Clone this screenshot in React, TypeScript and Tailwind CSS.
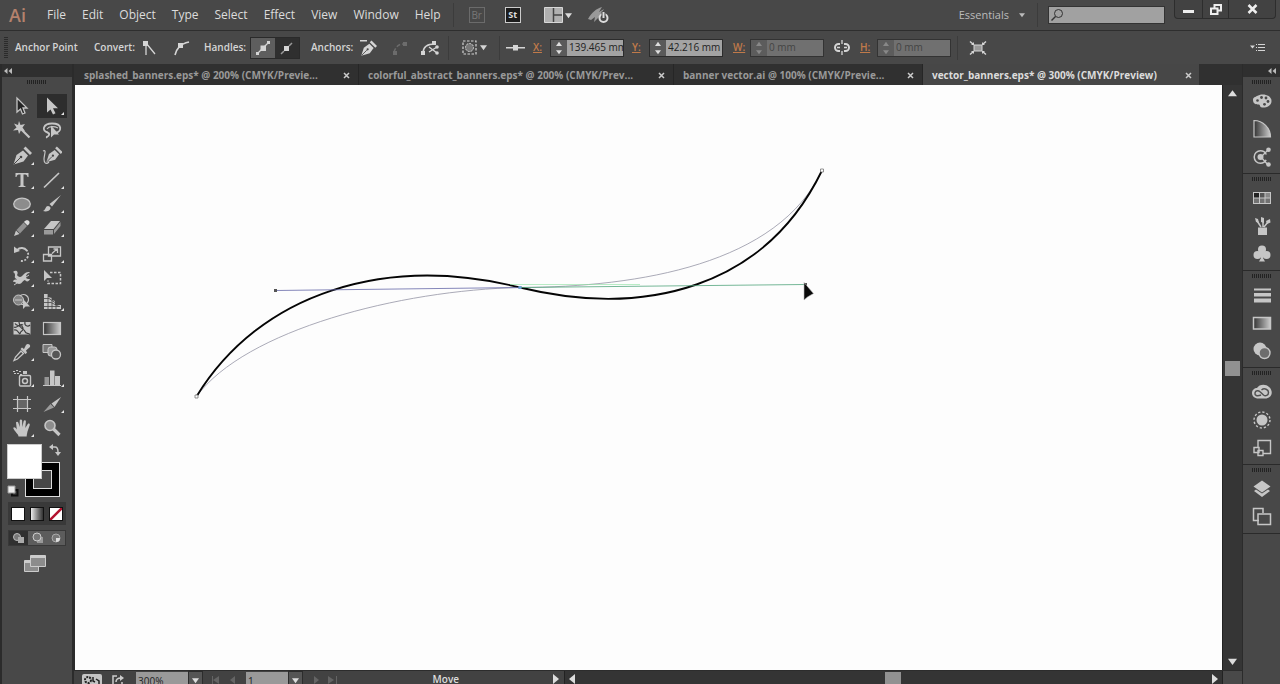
import { ReactNode } from "react";

const menus = ["File", "Edit", "Object", "Type", "Select", "Effect", "View", "Window", "Help"];

const tabs = [
  { title: "splashed_banners.eps* @ 200% (CMYK/Previe...", width: "w-[284px]" },
  { title: "colorful_abstract_banners.eps* @ 200% (CMYK/Prev...", width: "w-[315px]" },
  { title: "banner vector.ai @ 100% (CMYK/Previe...", width: "w-[249px]" },
  { title: "vector_banners.eps* @ 300% (CMYK/Preview)", width: "w-[276px]", active: true },
];

// 20px icon, filled with the current text colour
function Icon({ children }: { children: ReactNode }) {
  return (
    <svg width="20" height="20" viewBox="0 0 20 20" fill="currentColor" className="shrink-0">
      {children}
    </svg>
  );
}

function Line({ d, w = 1.5 }: { d: string; w?: number }) {
  return <path d={d} fill="none" stroke="currentColor" strokeWidth={w} />;
}

function Grip() {
  return (
    <div className="h-[10px] flex items-center justify-center">
      <svg width="20" height="4" fill="#222">
        {[0, 2, 4, 6, 8, 10, 12, 14, 16, 18].map((x) => (
          <rect key={x} x={x} width="1" height="4" />
        ))}
      </svg>
    </div>
  );
}

function Down({ size = 7 }: { size?: number }) {
  return (
    <svg width={size} height={size} viewBox="0 0 8 8" fill="currentColor" className="shrink-0">
      <path d="M0 1.5h8L4 7z" />
    </svg>
  );
}

function Collapse() {
  return (
    <svg width="8" height="6" viewBox="0 0 8 6" fill="#bbb">
      <path d="M3.500 0v6L0 3zM8 0v6L4.500 3z" />
    </svg>
  );
}

const penNib = (
  <>
    <path d="M1.500 18.500 4.500 9 11 4.500l5 5-4.500 6z" />
    <path d="m11.500 2.500 2-2 6.500 6.500-2 2z" />
    <path d="m2 18 6-6" stroke="#454545" strokeWidth="1" />
    <circle cx="9" cy="11" r="1.300" fill="#454545" />
  </>
);

const toolGroups: { name: string; icon: ReactNode; more?: boolean; on?: boolean }[][] = [
  [
    {
      name: "Selection",
      icon: (
        <path d="M5 2v14l3.500-3 2 5 2.500-1-2-5H15z" fill="#252525" stroke="currentColor" strokeWidth="1.300" />
      ),
    },
    { name: "Direct Selection", more: true, on: true, icon: <path d="M5 1.500v15l3.500-3 2.500 5 2.500-1.200-2.500-5H16z" /> },
    {
      name: "Magic Wand",
      icon: (
        <>
          <path d="m7 1 1.500 4L13 4l-2.500 3.500L13 11l-4-.8L7 14l-1-4-5 .5 3.500-3L2 3.500 6 5z" />
          <Line d="m9 9 8.500 8.500" w={2.2} />
        </>
      ),
    },
    {
      name: "Lasso",
      icon: (
        <>
          <Line d="M6 12.500C-1 11 1 3.500 10 3.500c11 0 10 8.500 3 9.500M4 11.500c1.500 2 4 1 3 3.500S4 16 5 18" w={1.800} />
          <Line d="M5 9c2-3 7-3 11-1" w={1.200} />
          <path d="M9 5.500v12l3-3h5z" />
        </>
      ),
    },
  ],
  [
    { name: "Pen", more: true, icon: penNib },
    {
      name: "Curvature",
      icon: (
        <>
          <Line d="M1 5c4-2 1 4 1 8s2 6 5 3" w={1.200} />
          <g transform="translate(3 0) scale(.88)">{penNib}</g>
        </>
      ),
    },
    {
      name: "Type",
      more: true,
      icon: <path d="M3.500 3h13v4h-1c-.3-1.800-1-2.400-4-2.400V15c0 .8.600 1 2 1.200v.8h-7v-.8c1.500-.2 2-.4 2-1.200V4.600C5.500 4.600 4.800 5.200 4.500 7h-1z" />,
    },
    { name: "Line Segment", more: true, icon: <Line d="M2 17.500 17 3" w={1.700} /> },
    {
      name: "Ellipse",
      more: true,
      icon: <ellipse cx="10" cy="10" rx="8.300" ry="5.800" fill="#8c8c8c" stroke="currentColor" strokeWidth="1.300" />,
    },
    {
      name: "Paintbrush",
      more: true,
      icon: (
        <path d="m19 1-9 11.500-2.500-2.500zM1 17c2-.5 2-2.500 3.500-4.500 1.500-1.500 4.500.2 4 2C7.800 17 4 18 1 17z" />
      ),
    },
    {
      name: "Pencil",
      more: true,
      icon: (
        <>
          <path d="m2 18 2-5.500 3.500 3.500z" />
          <path d="m4.500 12 7-7.500L15 8l-7 7.500z" fill="#919191" />
          <path d="M12 4c1.500-2.500 5-2.500 5.500 0 .3 1.500-.8 2.500-2 3.500z" fill="#ddd" />
        </>
      ),
    },
    {
      name: "Eraser",
      more: true,
      icon: (
        <>
          <path d="m2 11 7-8h9l-6.500 8z" />
          <path d="M2 12h9v4.500H2zM12 12l6.500-8v4L12 16z" fill="#9a9a9a" />
        </>
      ),
    },
  ],
  [
    {
      name: "Rotate",
      more: true,
      icon: (
        <>
          <path d="M5 6a6.500 6.500 0 1 1-1.500 6.500" fill="none" stroke="currentColor" strokeWidth="1.800" strokeDasharray="12 1.500 2 1.500 2 1.500 2 1.500 2" />
          <path d="M2 2.500v6.500l6-2z" />
        </>
      ),
    },
    {
      name: "Scale",
      more: true,
      icon: (
        <>
          <Line d="M6.500 3h12v9h-12zM1.500 10.500h8v6.500h-8z" w={1.300} />
          <Line d="m10 9.500 5-4.500M11.500 5h4v4" w={1.300} />
        </>
      ),
    },
    {
      name: "Width",
      more: true,
      icon: (
        <>
          <path d="M1 4c3-3 6 0 4 3 3 4 5 1 7-1s5-3 6-1c-3 0-4 2-4 4s2 2 4 2c-1 3-4 3-5 1-2 0-3 4-6 4s-4-3-6-2c0-2 2-3 4-2-1-2-3-2-2-4 0-2 0-3-2-4z" />
          <Line d="m2 17 15-10" w={1} />
        </>
      ),
    },
    {
      name: "Free Transform",
      icon: (
        <>
          <path d="M2 2v11l3-3h5z" />
          <path d="M8 4.500h10.500v11H6v-3" fill="none" stroke="currentColor" strokeWidth="1.500" strokeDasharray="2.500 1.500" />
        </>
      ),
    },
    {
      name: "Shape Builder",
      more: true,
      icon: (
        <>
          <circle cx="6.500" cy="8" r="5" fill="#858585" stroke="currentColor" />
          <path d="M8 4a5 5 0 1 1 1 8" fill="none" stroke="currentColor" strokeWidth="1.300" />
          <Line d="M3 8h7" w={1} />
          <path d="M11 7v10l2.500-2.500H18z" />
        </>
      ),
    },
    {
      name: "Perspective Grid",
      more: true,
      icon: (
        <>
          <path d="M2 2h4v15H2zM6 5l4 1v11H6zM10 8l3 1v8h-3zM13 13h6v4h-6z" />
          <path d="M2 6.500h5l6 4M2 10.500h7l8 4M2 14.500h16M6 2v15M10 6v11M14 11v6" fill="none" stroke="#454545" strokeWidth=".8" />
        </>
      ),
    },
  ],
  [
    {
      name: "Mesh",
      icon: (
        <>
          <rect x="1.500" y="4" width="17" height="12.500" />
          <path d="M3 5.500c2 3 4 1 6 4s3 1 4 4 3 1 5 3M2 12c4-1 3 2 6 4M7 4c0 5 3 2 4 6s-3 2-3 6M13 4c-1 4 3 5 5 3M2 9c3 2 5-4 9-2" fill="none" stroke="#3d3d3d" strokeWidth="1.200" />
        </>
      ),
    },
    { name: "Gradient", icon: <rect x="1.500" y="4.500" width="17" height="12" fill="url(#fade)" stroke="currentColor" strokeWidth="1.200" /> },
    {
      name: "Eyedropper",
      more: true,
      icon: (
        <>
          <path d="M10 5.500 12 7l2-4c1.500-2 5-.5 4 2l-4 3.500 1 2.200-1.500 1.300L8.500 7z" />
          <path d="m9 9 2.500 2.500-6 5.500L2 18.500l1.500-3.500z" fill="none" stroke="currentColor" strokeWidth="1.300" />
        </>
      ),
    },
    {
      name: "Blend",
      icon: (
        <>
          <path d="M1 2.500h9v8H1z" fill="#787878" stroke="currentColor" />
          <rect x="6" y="5" width="9" height="9" rx="2.500" fill="#999" stroke="#ccc" />
          <circle cx="14" cy="12.500" r="4.500" fill="#555" stroke="currentColor" strokeWidth="1.300" />
        </>
      ),
    },
  ],
  [
    {
      name: "Symbol Sprayer",
      more: true,
      icon: (
        <>
          <path d="M1 3h2v1H1zM4 2h2v1H4zM7 3h2v1H7zM2 5h2v1H2zM5 5h2v1H5zM8 6h2v1H8z" />
          <path d="M11 3h4v3h-4z" />
          <rect x="7.500" y="7.500" width="11" height="10.500" rx="1" fill="none" stroke="currentColor" strokeWidth="1.400" />
          <circle cx="13" cy="13" r="2.500" fill="none" stroke="currentColor" strokeWidth="1.500" />
        </>
      ),
    },
    {
      name: "Column Graph",
      more: true,
      icon: (
        <>
          <path d="M1 17h18v1H1zM13 8h5v9h-5z" />
          <path d="M2.500 9H7v8H2.500z" fill="#969696" />
          <path d="M8 2.500h4.500V17H8z" />
        </>
      ),
    },
  ],
  [
    {
      name: "Artboard",
      icon: (
        <>
          <path d="M6 6h9v8H6z" fill="#666" />
          <Line d="M5.500 2v16M15.500 2v16M1 5.500h18M1 14.500h18" w={1.200} />
        </>
      ),
    },
    {
      name: "Slice",
      more: true,
      icon: (
        <>
          <path d="M19 3 12.500 13l-3-3.500z" />
          <path d="m8.500 10 3.500 3.500L1.500 18z" fill="#9c9c9c" />
        </>
      ),
    },
    {
      name: "Hand",
      more: true,
      icon: <path d="M6.500 18.500c0-2.500-4-5-5.300-8.500.6-1.200 2.200-.8 3.600 1.500L4 4.500c.3-1.200 2-1 2.300 0L7.700 9V2.500c.3-1.300 2.100-1.300 2.400 0L10.300 9l1.400-6c.5-1.100 2.200-.8 2.200.5L13.300 10l2.500-4c.9-.9 2.400-.2 1.900 1.200L15.500 13.500c-.4 2-.8 3.500-.8 5z" />,
    },
    {
      name: "Zoom",
      icon: (
        <>
          <circle cx="8" cy="7.500" r="5" fill="#8d8d8d" stroke="currentColor" strokeWidth="1.600" />
          <Line d="m11.500 11 6 6" w={3.200} />
        </>
      ),
    },
  ],
];

const panelGroups: { name: string; icon: ReactNode }[][] = [
  [
    {
      name: "Color",
      icon: (
        <>
          <path d="M1 9c0-3 2.500-3 4-4C9 2 19.500 3 19.500 10c0 5-5.500 7-9.500 6.500-2.500-.3-1.500-3-3.500-3S1 13 1 9z" />
          <g fill="#484848">
            <circle cx="9.500" cy="6.500" r="1.400" />
            <circle cx="14" cy="7" r="1.400" />
            <circle cx="16" cy="10.500" r="1.400" />
            <circle cx="12.500" cy="13.300" r="1.400" />
            <circle cx="5.500" cy="9.500" r="1.300" />
          </g>
        </>
      ),
    },
    { name: "Color Guide", icon: <path d="M2 1.500c9 0 16.500 7.500 16.500 16.500H2z" fill="url(#fade)" stroke="currentColor" strokeWidth="1.200" /> },
    {
      name: "Color Themes",
      icon: (
        <>
          <circle cx="8.500" cy="10" r="6.300" fill="none" stroke="currentColor" strokeWidth="1.500" strokeDasharray="33 7" strokeDashoffset="-3" />
          <circle cx="8.500" cy="10" r="3" />
          <Line d="m9 10 7-7M9 10l7 8" w={1.300} />
          <circle cx="16.500" cy="2.800" r="2.300" />
          <circle cx="16.500" cy="17.500" r="2.300" />
        </>
      ),
    },
  ],
  [
    {
      name: "Swatches",
      icon: (
        <>
          <rect x="1" y="4" width="18" height="12" />
          <path d="M2 5h5v4.500H2z" fill="#222" />
          <path d="M8 5h4.500v4.500H8z" fill="#555" />
          <path d="M13.500 5H18v4.500h-4.500z" fill="#888" />
          <path d="M2 10.500h5V15H2zM8 10.500h4.500V15H8zM13.500 10.500H18V15h-4.500z" fill="#727272" />
        </>
      ),
    },
    {
      name: "Brushes",
      icon: (
        <>
          <path d="M6 11.500h9V19H6z" />
          <Line d="M9 11 4.500 4M11 11V3M12 11l4-5" w={1.500} />
          <path d="M3 2l3 1 1 4-3-1zM9 1l3 1v5l-3-1zM14 5l4-2 .5 3.500L15 8z" />
        </>
      ),
    },
    {
      name: "Symbols",
      icon: (
        <>
          <circle cx="10" cy="5.500" r="4" />
          <circle cx="5.500" cy="11" r="4" />
          <circle cx="14.500" cy="11" r="4" />
          <path d="M9 8h2v6l2 3.500H7L9 14z" />
        </>
      ),
    },
  ],
  [
    { name: "Stroke", icon: <path d="M2 3.500h17v2H2zM2 8h17v3.500H2zM2 13.500h17v4H2z" /> },
    { name: "Gradient panel", icon: <rect x="1.500" y="4.500" width="17" height="11.500" fill="url(#fade)" stroke="currentColor" strokeWidth="1.500" /> },
    {
      name: "Transparency",
      icon: (
        <>
          <circle cx="8" cy="8" r="6.500" />
          <circle cx="12.500" cy="12" r="5.500" fill="#6d6d6d" stroke="currentColor" strokeWidth="1.400" />
        </>
      ),
    },
  ],
  [
    {
      name: "Libraries",
      icon: (
        <>
          <path d="M6.500 16.500C2.500 16.500 0 14 0 11s2.500-5 5-5c2-4 9-4.500 12-1 4 3 4 10-2.500 11.500z" />
          <path d="M9 13c-4 1.500-6.500.5-6-2.200.5-2.500 3.500-2.500 5-1l3.500 3.200c2 1.500 5 .5 5-2.500s-4-5-7-2.500" fill="none" stroke="#515151" strokeWidth="1.500" />
        </>
      ),
    },
    {
      name: "Appearance",
      icon: (
        <>
          <circle cx="10" cy="10" r="5.500" />
          <circle cx="10" cy="10" r="8" fill="none" stroke="currentColor" strokeWidth="1.400" strokeDasharray="2.200 2" />
        </>
      ),
    },
    {
      name: "Asset Export",
      icon: <Line d="M6 9V2.500h12.500v13H11M2 9.500h5v5H2zM6 12.500h5v5H6z" w={1.400} />,
    },
  ],
  [
    {
      name: "Layers",
      icon: (
        <>
          <path d="m10 1.500 8.500 6L10 13.500 1.500 7.500z" />
          <path d="m2 12 2-1.500 6 4 6-4 2 1.500-8 6z" />
        </>
      ),
    },
    {
      name: "Artboards",
      icon: <Line d="M7 13.500H1.500V1.500h9.500V6M6 7h12.500v10.500H6z" w={1.500} />,
    },
  ],
];

function Divider() {
  return <div className="w-px h-6 bg-[#3c3c3c]" />;
}

function Measure({ id, label, value, off }: { id: string; label: string; value: string; off?: boolean }) {
  return (
    <div className="flex items-center">
      <label htmlFor={id} className="w-[17px] text-[#c07a4a] underline font-semibold">
        {label}
      </label>
      <div className={off ? "flex h-[18px] border border-[#333] bg-[#5c5c5c] text-[#888]" : "flex h-[18px] border border-[#2c2c2c] bg-[#5a5a5a] text-[#ddd]"}>
        <div className="w-4 flex flex-col">
          <button aria-label={label + " up"} className="flex-1 flex items-center justify-center rotate-180">
            <Down size={6} />
          </button>
          <button aria-label={label + " down"} className="flex-1 flex items-center justify-center">
            <Down size={6} />
          </button>
        </div>
        <input
          id={id}
          defaultValue={value}
          disabled={off}
          className={off ? "w-14 pl-[2px] bg-[#707070] text-[#444]" : "w-14 pl-[2px] bg-[#a3a3a3] text-[#222]"}
        />
      </div>
    </div>
  );
}

function MenuBar() {
  return (
    <header className="h-[31px] shrink-0 flex items-center border-b border-[#2e2e2e] pl-[9px] text-xs text-[#dcdcdc]">
      <h1 className="w-[38px] text-lg leading-5 text-[#b5826d] font-semibold">Ai</h1>
      <nav className="flex gap-4">
        {menus.map((m) => (
          <button key={m}>{m}</button>
        ))}
      </nav>
      <div className="ml-3 flex items-center">
        <Divider />
        <button className="ml-[15px] size-4 border border-[#6b6b6b] text-[10px] leading-3 text-[#777]">Br</button>
        <button className="ml-5 size-4 border border-[#ccc] bg-[#1c1c1c] text-[9px] leading-3 font-bold text-[#ddd]">St</button>
        <button aria-label="Arrange documents" className="ml-[23px] flex items-center gap-[2px]">
          <svg width="19" height="16" fill="#b0b0b0">
            <path d="M.500.500h18v15H.500z" stroke="#d8d8d8" />
            <path d="M9.500 1v14M10 8h8" stroke="#444" strokeWidth="1.500" />
          </svg>
          <Down />
        </button>
        <button aria-label="GPU performance" className="ml-[15px]">
          <svg width="24" height="18" fill="#999">
            <path d="M1 13C5 6 9 3 15 1l-3 5 5-3-5 8-5 5 1-5-4 3z" />
            <circle cx="16.500" cy="12" r="4" fill="#484848" stroke="#ddd" strokeWidth="2" />
            <path d="M16.500 5.500v7" stroke="#484848" strokeWidth="4" />
            <path d="M16.500 6v6" stroke="#ddd" strokeWidth="2" />
          </svg>
        </button>
      </div>
      <div className="ml-auto flex items-center self-stretch pr-1">
        <button className="flex items-center gap-[10px] text-[#bbb] text-[11px]">
          Essentials <Down size={6} />
        </button>
        <div className="ml-3">
          <Divider />
        </div>
        <label className="ml-[10px] w-[117px] h-[18px] flex items-center bg-[#a1a1a1] border border-[#333]">
          <svg width="16" height="14" fill="none" stroke="#333" className="ml-px shrink-0">
            <circle cx="8.500" cy="5.500" r="4" />
            <path d="m5.500 8.500-4 4" strokeWidth="1.500" />
          </svg>
          <input aria-label="Search" className="w-full min-w-0 bg-transparent" />
        </label>
        <div className="ml-[9px] self-start h-[19px] flex border border-t-0 border-[#2d2d2d] bg-[#424242] rounded-b text-[#eee]">
          <button aria-label="Minimize" className="w-7 flex items-center justify-center border-r border-[#2d2d2d]">
            <svg width="11" height="12">
              <path d="M0 7h11v3H0z" fill="currentColor" />
            </svg>
          </button>
          <button aria-label="Restore" className="w-[26px] flex items-center justify-center border-r border-[#2d2d2d]">
            <svg width="12" height="11" fill="none" stroke="currentColor" strokeWidth="2">
              <path d="M4.500 4V1H11v5.500H8M1 4.500h6.500V10H1z" />
            </svg>
          </button>
          <button aria-label="Close" className="w-[46px] flex items-center justify-center">
            <svg width="11" height="10" stroke="currentColor" strokeWidth="2.500">
              <path d="m1.500 1 8 8M9.500 1l-8 8" />
            </svg>
          </button>
        </div>
      </div>
    </header>
  );
}

function ControlBar() {
  return (
    <div className="h-[33px] shrink-0 flex items-center pl-1 pr-[15px] text-[10px] text-[#d5d5d5]">
      <div className="w-[11px]">
        <svg width="4" height="22" fill="#2b2b2b">
          {[0, 2, 4, 6, 8, 10, 12, 14, 16, 18, 20].map((y) => (
            <rect key={y} y={y} width="4" height="1" />
          ))}
        </svg>
      </div>
      <span className="w-[79px] font-semibold">Anchor Point</span>
      <span className="w-[46px] font-semibold">Convert:</span>
      <button aria-label="Convert to corner">
        <Icon>
          <path d="M3 3h5v5H3z" />
          <Line d="M6 4v13M6 5l9 11" w={1.300} />
        </Icon>
      </button>
      <button aria-label="Convert to smooth" className="ml-3">
        <Icon>
          <path d="M6 5h5v5H6z" />
          <Line d="M3 17C5 10 8 6 17 4" w={1.600} />
        </Icon>
      </button>
      <span className="ml-3 w-[46px] font-semibold">Handles:</span>
      <div className="flex border border-[#2a2a2a]">
        <button aria-label="Show handles" className="w-6 h-5 flex items-center justify-center bg-[#5e5e5e]">
          <Icon>
            <Line d="M4 16 16 4" w={1.300} />
            <path d="M7.500 7.500h5.500v5.500H7.500zM3 14h3v3H3zM14 3h3v3h-3z" />
          </Icon>
        </button>
        <button aria-label="Hide handles" className="w-6 h-5 flex items-center justify-center bg-[#2f2f2f]">
          <Icon>
            <path d="M7 8h5v5H7z" />
            <path d="m4 16 3-3M12 8l3-3" stroke="#999" strokeWidth="1.500" />
          </Icon>
        </button>
      </div>
      <span className="ml-[11px] w-[47px] font-semibold">Anchors:</span>
      <button aria-label="Remove anchor">
        <Icon>
          <path d="M2 2h7v1.500H2z" />
          <g transform="translate(2 2) scale(.85)">{penNib}</g>
        </Icon>
      </button>
      <button aria-label="Connect end points" disabled className="ml-3 text-[#6c6c6c]">
        <Icon>
          <path d="M4 14c2-6 5-8 10-8" fill="none" stroke="currentColor" strokeWidth="1.500" strokeDasharray="4 2" />
          <path d="M13 4h4v4h-4zM3 13h4v4H3z" />
        </Icon>
      </button>
      <button aria-label="Cut path" className="ml-[10px]">
        <Icon>
          <Line d="M3 15c0-6 4-9 12-9M9 9l8 6M9 14l8-5" w={1.400} />
          <path d="M12 3h4v4h-4zM1 13h4v4H1z" />
          <circle cx="17" cy="9" r="1.800" />
          <circle cx="17" cy="15" r="1.800" />
        </Icon>
      </button>
      <div className="ml-2">
        <Divider />
      </div>
      <button aria-label="Isolate" className="ml-[11px] flex items-center">
        <Icon>
          <path d="M3 3h13v13H3z" fill="none" stroke="currentColor" strokeWidth="1.200" strokeDasharray="2.500 1.500" />
          <circle cx="9.500" cy="9.500" r="4" fill="#777" stroke="currentColor" strokeDasharray="2 1" />
        </Icon>
        <Down />
      </button>
      <div className="ml-3">
        <Divider />
      </div>
      <div className="ml-[6px] w-[27px]">
        <Icon>
          <path d="M0 9h19v1.500H0zM7 7h5v5.500H7z" />
        </Icon>
      </div>
      <Measure id="x" label="X:" value="139.465 mm" />
      <div className="ml-2" />
      <Measure id="y" label="Y:" value="42.216 mm" />
      <div className="ml-[10px]" />
      <Measure id="w" label="W:" value="0 mm" off />
      <button aria-label="Link width and height" className="ml-2 mr-2">
        <Icon>
          <Line d="M8 6H6.500a3.500 3.500 0 0 0 0 7H8M12 6h1.500a3.500 3.500 0 0 1 0 7H12" w={2} />
          <Line d="M10 2v4M10 13v4M5 9.500h3M12 9.500h3" w={1.300} />
        </Icon>
      </button>
      <Measure id="h" label="H:" value="0 mm" off />
      <div className="ml-[6px]">
        <Divider />
      </div>
      <button aria-label="Transform each" className="ml-[10px]">
        <Icon>
          <path d="M6 7h8v6H6z" fill="#999" stroke="currentColor" />
          <Line d="m2 3.500 3.500 3M18 3.500l-3.500 3M2 16.500l3.500-3M18 16.500l-3.500-3" w={1.500} />
          <path d="M6 4v3H3zM14 4v3h3zM6 16v-3H3zM14 16v-3h3z" />
        </Icon>
      </button>
      <button aria-label="Panel menu" className="ml-auto">
        <svg width="15" height="9" fill="currentColor">
          <path d="M0 2.500h5L2.500 5.500zM6 1h1v1H6zM8 1h7v1H8zM6 4h1v1H6zM8 4h7v1H8zM6 7h1v1H6zM8 7h7v1H8z" />
        </svg>
      </button>
    </div>
  );
}

function Toolbar() {
  return (
    <aside className="w-[74px] shrink-0 border-l-2 border-r-2 border-[#2b2b2b] text-[#c6c6c6]">
      <div className="h-[13px] bg-[#2f2f2f] pl-[2px] flex items-center">
        <Collapse />
      </div>
      <Grip />
      <div className="mt-[7px] flex flex-col gap-[2px]">
        {toolGroups.map((group, i) => (
          <div key={i} className="grid grid-cols-2 px-[5px]">
            {group.map((t) => (
              <button
                key={t.name}
                aria-label={t.name}
                className={t.on ? "relative h-6 flex items-center justify-center bg-[#2d2d2d]" : "relative h-6 flex items-center justify-center"}
              >
                <Icon>{t.icon}</Icon>
                {t.more && (
                  <svg width="3" height="3" className="absolute right-[3px] bottom-[3px]">
                    <path d="M3 0v3H0z" fill="#e5e5e5" />
                  </svg>
                )}
              </button>
            ))}
          </div>
        ))}
      </div>
      {/* fill and stroke */}
      <div className="relative h-[60px] mt-[2px]">
        <button aria-label="Stroke" className="absolute left-[23px] top-[20px] size-[35px] bg-black border border-[#ddd] p-[7px]">
          <span className="block size-full bg-[#484848] border border-[#ddd]" />
        </button>
        <button aria-label="Fill" className="absolute left-[5px] top-[2px] size-[35px] bg-white border border-[#ccc]" />
        <button aria-label="Swap fill and stroke" className="absolute left-[47px] top-[2px]">
          <svg width="12" height="12" fill="currentColor">
            <path d="M4 0v6L0 3zM12 8H6l3 4z" />
            <path d="M3 3h3q3 0 3 5" fill="none" stroke="currentColor" strokeWidth="1.500" />
          </svg>
        </button>
        <button aria-label="Default fill and stroke" className="absolute left-[5px] top-[43px]">
          <svg width="12" height="12">
            <path d="M5 5h5.500v5.500H5z" fill="none" stroke="#111" strokeWidth="2" />
            <path d="M1 1h7v7H1z" fill="#eee" stroke="#999" />
          </svg>
        </button>
      </div>
      <div className="ml-[6px] w-[58px] h-[23px] flex items-center justify-between px-[3px] bg-[#393939]">
        <button aria-label="Color fill" className="size-[14px] bg-white border border-[#111]" />
        <button aria-label="Gradient fill" className="size-[14px] bg-linear-to-r from-[#eee] to-[#333] border border-[#111]" />
        <button aria-label="No fill" className="size-[14px] bg-white border border-[#111]">
          <svg width="12" height="12">
            <path d="M0 12 12 0" stroke="#b3122f" strokeWidth="2.500" />
          </svg>
        </button>
      </div>
      <div className="mt-[5px] ml-[6px] w-[58px] h-4 flex bg-[#5c5c5c] border border-[#383838]">
        <button aria-label="Draw normal" className="flex-1 flex items-center justify-center bg-[#303030]">
          <svg width="13" height="12">
            <circle cx="5" cy="5" r="3.500" fill="#777" stroke="#bbb" />
            <path d="M6 5h6v6H6z" fill="#aaa" />
          </svg>
        </button>
        <button aria-label="Draw behind" className="flex-1 flex items-center justify-center">
          <svg width="13" height="12">
            <path d="M6 5h6v6H6z" fill="#999" />
            <circle cx="6" cy="5" r="4" fill="#777" stroke="#ccc" />
          </svg>
        </button>
        <button aria-label="Draw inside" className="flex-1 flex items-center justify-center">
          <svg width="12" height="12">
            <circle cx="6" cy="6" r="4" fill="#777" stroke="#aaa" />
            <path d="M6 6h4a4 4 0 0 1-4 4z" fill="#ddd" />
          </svg>
        </button>
      </div>
      <button aria-label="Screen mode" className="block mt-[9px] ml-[22px]">
        <svg width="22" height="17" stroke="#ccc" fill="#8c8c8c">
          <path d="M.500 5.500h14v11H.500z" />
          <path d="M6.500.500h15v11h-15z" />
          <path d="M6 2h16M1 7h5" strokeWidth="2" />
        </svg>
      </button>
    </aside>
  );
}

function Drawing() {
  return (
    <svg width="760" height="340" fill="none" className="block" aria-label="Artwork">
      <g transform="translate(-75 -85)">
        <path d="M196.500 396.500C245 330 400 290 520 287.500 640 287 778 264 822 170.500" stroke="#9494a4" strokeWidth=".8" />
        <path d="M196.500 396.500C260 293 385 254 520 287.500 645 318 765 288 822 170.500" stroke="#050505" strokeWidth="1.900" />
        <path d="M275.500 290.500 520 287.500" stroke="#6668a8" strokeWidth=".8" />
        <path d="M520 287.500 805 284.500" stroke="#52a57c" strokeWidth=".8" />
        <path d="M510 284.500H640" stroke="#8be0a0" strokeWidth=".6" />
        <path d="M274 289h3v3h-3zM804 283h3v3h-3z" fill="#555" />
        <path d="M518.500 286h3v3h-3z" fill="#6d9fd0" />
        <path d="M195 395h3v3h-3zM820.500 169h3v3h-3z" fill="#fff" stroke="#777" strokeWidth=".8" />
        <path d="M804 282.500v17.500l3.500-3 6-3.500z" fill="#0a0a0a" stroke="#bbb" strokeWidth=".6" />
      </g>
    </svg>
  );
}

function StatusBar() {
  return (
    <footer className="h-[14px] shrink-0 flex items-start overflow-hidden text-[10px] bg-[#424242] text-[#ddd] border-t border-[#2c2c2c]">
      <div className="w-[491px] shrink-0 flex items-start pl-2 border-r border-[#222]">
        <button aria-label="GPU preview" className="mt-[3px]">
          <svg width="20" height="13">
            <rect width="20" height="13" rx="2" fill="#c4c4c4" />
            <circle cx="6" cy="6" r="3" fill="none" stroke="#222" strokeWidth="2" strokeDasharray="2 1" />
            <path d="M11 3v4l2 1M14 5l3 2v4" fill="none" stroke="#222" strokeWidth="1.500" />
          </svg>
        </button>
        <button aria-label="Share" className="mt-[3px] ml-[10px]">
          <svg width="13" height="13" fill="none" stroke="#ccc" strokeWidth="1.500">
            <path d="M5 2H1v10h9V8M4 8c0-3 2-4 5-4" />
            <path d="M8 1v6l4-3z" fill="#ccc" stroke="none" />
          </svg>
        </button>
        <input aria-label="Zoom level" defaultValue="300%" className="ml-[11px] mt-px w-[52px] h-[18px] pl-[2px] bg-[#999] text-[#222]" />
        <button aria-label="Zoom presets" className="w-[15px] h-[18px] flex items-center justify-center border border-[#2c2c2c] bg-[#555]">
          <Down />
        </button>
        <svg width="28" height="18" fill="#646464" className="ml-[7px]">
          <path d="M2 5h1v8H2zM9 5v8L3 9zM25 5v8l-5-4z" />
        </svg>
        <input aria-label="Artboard number" defaultValue="1" className="ml-2 mt-px w-[42px] h-[18px] pl-[2px] bg-[#999] text-[#222]" />
        <button aria-label="Artboards list" className="w-[15px] h-[18px] flex items-center justify-center border border-[#2c2c2c] bg-[#555]">
          <Down />
        </button>
        <svg width="30" height="18" fill="#646464" className="ml-[9px]">
          <path d="M2 5v8l5-4zM16 5v8l6-4zM24 5h1v8h-1z" />
        </svg>
        <span className="ml-auto mt-px font-semibold leading-[14px]">Move</span>
        <svg width="6" height="10" fill="#ddd" className="ml-[94px] mr-[5px] mt-[3px]">
          <path d="M0 0v10l6-5z" />
        </svg>
      </div>
      <div className="flex-1 h-full flex items-start justify-between bg-[#343434] px-1 pt-px">
        <svg width="6" height="10" fill="#ddd" className="mt-[2px]">
          <path d="M6 0v10L0 5z" />
        </svg>
        <div className="ml-[310px] mr-auto w-4 h-[14px] bg-[#919191]" />
        <svg width="6" height="10" fill="#ddd" className="mt-[2px]">
          <path d="M0 0v10l6-5z" />
        </svg>
      </div>
      <div className="w-5 h-full bg-[#494949] border-l border-[#222]" />
    </footer>
  );
}

function PanelDock() {
  return (
    <aside className="w-[38px] shrink-0 border-l border-[#2b2b2b] text-[#c6c6c6]">
      <div className="h-[13px] bg-[#2f2f2f] flex items-center justify-end pr-1">
        <Collapse />
      </div>
      {panelGroups.map((group, i) => (
        <div key={i} className="pb-[2px] border-b border-[#2a2a2a]">
          <Grip />
          {group.map((p) => (
            <button key={p.name} aria-label={p.name} className="w-full h-7 flex items-center justify-center">
              <Icon>{p.icon}</Icon>
            </button>
          ))}
        </div>
      ))}
    </aside>
  );
}

export default function App() {
  return (
    <div className="h-screen flex flex-col overflow-hidden bg-[#484848] font-['Open_Sans',sans-serif]">
      {/* gradient shared by the icons */}
      <svg width="0" height="0" className="absolute">
        <linearGradient id="fade">
          <stop offset="0" stopColor="#333" />
          <stop offset="1" stopColor="#ccc" />
        </linearGradient>
      </svg>
      <MenuBar />
      <ControlBar />
      <div className="flex-1 min-h-0 flex">
        <Toolbar />
        <main className="flex-1 min-w-0 flex flex-col">
          <div className="h-[21px] shrink-0 flex bg-[#303030] pl-px text-[10px] font-bold">
            {tabs.map((t) => (
              <div
                key={t.title}
                className={
                  t.width +
                  (t.active
                    ? " flex items-center justify-between pt-px pl-[9px] pr-[7px] bg-[#474747] text-[#dcdcdc]"
                    : " flex items-center justify-between pt-px pl-[9px] pr-2 border-r border-[#262626] text-[#999]")
                }
              >
                <button className="whitespace-nowrap">{t.title}</button>
                <button aria-label="Close tab" className="text-[#ccc]">
                  <svg width="7" height="7" stroke="currentColor" strokeWidth="1.500">
                    <path d="m1 1 5 5M6 1 1 6" />
                  </svg>
                </button>
              </div>
            ))}
          </div>
          <div className="flex-1 min-h-0 flex">
            <div className="flex-1 min-w-0 overflow-hidden bg-[#fdfdfd] border-l border-[#2b2b2b]">
              <Drawing />
            </div>
            <div className="w-5 flex flex-col items-center bg-[#353535] border-l border-[#222] pt-1 pb-1 text-[#ddd]">
              <div className="rotate-180">
                <Down size={9} />
              </div>
              <div className="flex-[29]" />
              <div className="w-[15px] h-[15px] bg-[#919191]" />
              <div className="flex-[31]" />
              <Down size={9} />
            </div>
          </div>
          <StatusBar />
        </main>
        <PanelDock />
      </div>
    </div>
  );
}
